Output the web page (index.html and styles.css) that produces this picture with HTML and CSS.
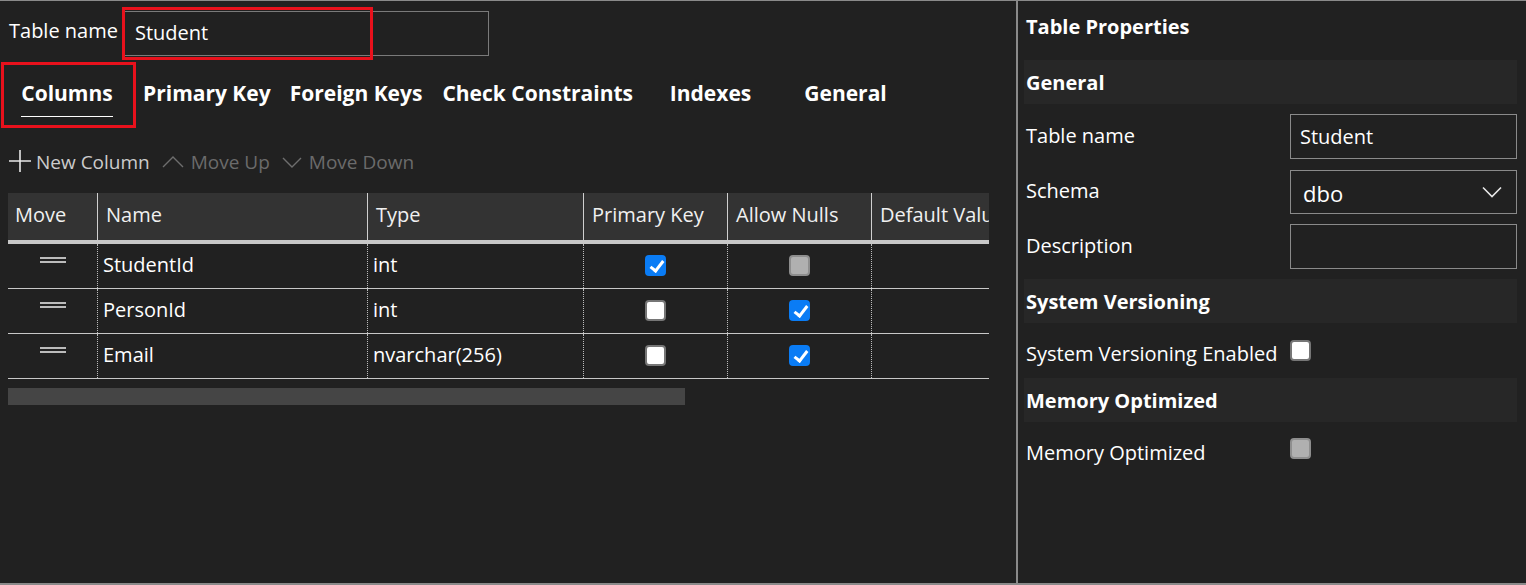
FILE: index.html
```html
<!DOCTYPE html>
<html>
<head>
<meta charset="utf-8">
<link rel="stylesheet" href="styles.css">
</head>
<body>
<div class="app">
  <div class="left">
    <div class="name-row">
      <span class="label">Table name</span>
      <div class="name-input">Student</div>
      <div class="mark mark-input"></div>
    </div>
    <div class="tabs">
      <div class="tab active"><span class="tab-text">Columns</span></div>
      <div class="tab"><span class="tab-text">Primary Key</span></div>
      <div class="tab"><span class="tab-text">Foreign Keys</span></div>
      <div class="tab"><span class="tab-text">Check Constraints</span></div>
      <div class="tab"><span class="tab-text">Indexes</span></div>
      <div class="tab"><span class="tab-text">General</span></div>
      <div class="mark mark-tab"></div>
    </div>
    <div class="toolbar">
      <span class="tool">
        <svg class="ico-plus" width="22" height="22" viewBox="0 0 22 22"><path d="M11 0V22M0 11H22" stroke="#e8e8e8" stroke-width="1.6" fill="none"/></svg>
        <span>New Column</span>
      </span>
      <span class="tool disabled">
        <svg width="22" height="14" viewBox="0 0 22 14"><path d="M1 12L11 2L21 12" stroke="#6e6e6e" stroke-width="1.4" fill="none"/></svg>
        <span>Move Up</span>
      </span>
      <span class="tool disabled">
        <svg width="20" height="14" viewBox="0 0 20 14"><path d="M1 3L10 12L19 3" stroke="#6e6e6e" stroke-width="1.4" fill="none"/></svg>
        <span>Move Down</span>
      </span>
    </div>
    <div class="grid-wrap">
      <div class="grid">
        <div class="row head">
          <div class="cell c-move">Move</div>
          <div class="cell c-name">Name</div>
          <div class="cell c-type">Type</div>
          <div class="cell c-pk">Primary Key</div>
          <div class="cell c-null">Allow Nulls</div>
          <div class="cell c-def">Default Value</div>
        </div>
        <div class="row body">
          <div class="cell c-move"><span class="handle"></span></div>
          <div class="cell c-name">StudentId</div>
          <div class="cell c-type">int</div>
          <div class="cell c-pk center"><span class="cb checked"></span></div>
          <div class="cell c-null center"><span class="cb disabled"></span></div>
          <div class="cell c-def"></div>
        </div>
        <div class="row body">
          <div class="cell c-move"><span class="handle"></span></div>
          <div class="cell c-name">PersonId</div>
          <div class="cell c-type">int</div>
          <div class="cell c-pk center"><span class="cb"></span></div>
          <div class="cell c-null center"><span class="cb checked"></span></div>
          <div class="cell c-def"></div>
        </div>
        <div class="row body">
          <div class="cell c-move"><span class="handle"></span></div>
          <div class="cell c-name">Email</div>
          <div class="cell c-type">nvarchar(256)</div>
          <div class="cell c-pk center"><span class="cb"></span></div>
          <div class="cell c-null center"><span class="cb checked"></span></div>
          <div class="cell c-def"></div>
        </div>
      </div>
      <div class="hscroll"></div>
    </div>
  </div>
  <div class="divider"></div>
  <div class="right">
    <div class="title">Table Properties</div>
    <div class="band">General</div>
    <div class="prop">
      <span class="plabel">Table name</span>
      <div class="pinput">Student</div>
    </div>
    <div class="prop">
      <span class="plabel">Schema</span>
      <div class="pinput select"><span class="sel-val">dbo</span>
        <svg width="20" height="12" viewBox="0 0 20 12"><path d="M1 1.5L10 10.5L19 1.5" stroke="#e8e8e8" stroke-width="1.6" fill="none"/></svg>
      </div>
    </div>
    <div class="prop">
      <span class="plabel">Description</span>
      <div class="pinput"></div>
    </div>
    <div class="band band-sv">System Versioning</div>
    <div class="crow">
      <span class="clabel">System Versioning Enabled</span>
      <span class="cb"></span>
    </div>
    <div class="band band-mo">Memory Optimized</div>
    <div class="crow crow-mo">
      <span class="clabel">Memory Optimized</span>
      <span class="cb disabled"></span>
    </div>
  </div>
</div>
</body>
</html>
```

FILE: styles.css
```css
* { box-sizing: border-box; }
html, body { margin: 0; padding: 0; }
body {
  width: 1526px;
  height: 585px;
  background: #212121;
  color: #ffffff;
  font-family: "Open Sans", "Noto Sans", sans-serif;
  font-size: 20px;
  overflow: hidden;
}
.app {
  display: flex;
  height: 585px;
  border-top: 1px solid #8a8a8a;
  border-bottom: 2px solid #8a8a8a;
}
.left {
  width: 1016px;
  flex: none;
  position: relative;
}
.divider {
  width: 2px;
  flex: none;
  background: #8a8a8a;
}
.right {
  flex: 1;
  padding: 0 9px 0 6px;
}

/* table name */
.name-row {
  display: flex;
  align-items: center;
  height: 55px;
  padding: 9px 0 0 9px;
  position: relative;
}
.label { width: 113px; flex: none; line-height: 1; padding-bottom: 4px; }
.name-input {
  width: 367px;
  height: 45px;
  border: 1px solid #7a7a7a;
  display: flex;
  align-items: center;
  padding: 0 12px;
  line-height: 1;
}
.mark {
  position: absolute;
  border: 3px solid #e8111c;
  pointer-events: none;
}
.mark-input { left: 122px; top: 6px; width: 251px; height: 53px; }

/* tabs */
.tabs {
  display: flex;
  height: 80px;
  position: relative;
  padding-top: 4px;
}
.tab {
  min-width: 135px;
  padding: 0 10px;
  display: flex;
  justify-content: center;
  font-weight: 700;
  font-size: 21px;
}
.tab:first-child { min-width: 134px; padding: 0 9px; }
.tab:nth-child(2) { padding: 0 9px; }
.tab-text {
  display: block;
  height: 57px;
  padding-top: 20px;
  line-height: 26px;
}
.tab.active .tab-text { border-bottom: 1.5px solid #ffffff; }
.mark-tab { left: 1px; top: 6px; width: 135px; height: 66px; }

/* toolbar */
.toolbar {
  display: flex;
  align-items: center;
  height: 52px;
  padding-left: 9px;
  gap: 12px;
  color: #cccccc;
  font-size: 19px;
}
.tool { display: flex; align-items: center; gap: 5px; }
.tool.disabled { color: #6b6b6b; gap: 7px; }
.ico-plus { margin-top: -2px; }

/* grid */
.grid-wrap {
  margin-top: 5px;
  margin-left: 8px;
  width: 981px;
  overflow: hidden;
}
.grid { width: 1100px; }
.row { display: flex; }
.row.head {
  height: 51px;
  background: #333333;
  border-bottom: 4px solid #c8c8c8;
}
.row.body {
  height: 45px;
  border-bottom: 1px solid #c8c8c8;
}
.cell {
  flex: none;
  display: flex;
  align-items: center;
  padding-left: 5px;
  white-space: nowrap;
  color: #ffffff;
}
.body .cell { padding-bottom: 3px; }
.head .cell { padding-left: 8px; padding-bottom: 4px; color: #f0f0f0; }
.head .c-move { padding-left: 7px; }
.head .cell + .cell { border-left: 1px solid #cfcfcf; }
.body .cell + .cell { border-left: 1px dotted #bdbdbd; }
.c-move { width: 89px; }
.c-name { width: 270px; }
.c-type { width: 216px; }
.c-pk { width: 144px; }
.c-null { width: 144px; }
.c-def { width: 237px; }
.body .cell.center { justify-content: center; padding-left: 0; padding-bottom: 1px; }
.body .c-move { justify-content: center; padding-left: 0; align-items: flex-start; padding-top: 13px; }
.handle {
  display: block;
  width: 26px;
  height: 6px;
  border-top: 2px solid #bcbcbc;
  border-bottom: 2px solid #bcbcbc;
  margin-left: 1px;
}

.hscroll {
  margin-top: 9px;
  width: 677px;
  height: 17px;
  background: #454545;
}

/* checkboxes */
.cb {
  display: inline-block;
  width: 21px;
  height: 21px;
  border-radius: 4px;
  background: #ffffff;
  border: 2px solid #767676;
  flex: none;
  position: relative;
}
.cb.checked {
  background: #0a7cf5;
  border-color: #0a7cf5;
}
.cb.checked::after {
  content: "";
  position: absolute;
  left: 5.5px;
  top: 1px;
  width: 5px;
  height: 11px;
  border-right: 3px solid #ffffff;
  border-bottom: 3px solid #ffffff;
  transform: rotate(38deg);
}
.cb.disabled {
  background: #b0b0b0;
  border-color: #8e8e8e;
}

/* right panel */
.title {
  height: 59px;
  padding: 11px 0 0 2px;
  font-weight: 700;
  font-size: 20px;
  line-height: 30px;
}
.band {
  height: 44px;
  background: #272727;
  display: flex;
  align-items: center;
  padding-left: 2px;
  font-weight: 700;
  font-size: 20px;
}
.prop {
  display: flex;
  align-items: center;
  height: 45px;
  margin-top: 10px;
  padding-left: 2px;
}
.plabel { width: 264px; flex: none; padding-bottom: 3px; }
.pinput {
  width: 227px;
  height: 45px;
  border: 1px solid #8a8a8a;
  display: flex;
  align-items: center;
  padding: 0 9px;
  line-height: 1;
}
.pinput.select { justify-content: space-between; padding: 0 14px 0 12px; height: 44px; }
.sel-val { font-size: 22px; padding-top: 2px; }
.band-sv { margin-top: 10px; }
.crow {
  display: flex;
  align-items: center;
  height: 55px;
  padding-left: 2px;
}
.clabel { width: 264px; flex: none; white-space: nowrap; padding-top: 6px; }
.crow .cb { margin-top: -1px; }
.crow-mo .clabel { padding-top: 6px; }
.crow-mo .cb { margin-top: -3px; }
```
